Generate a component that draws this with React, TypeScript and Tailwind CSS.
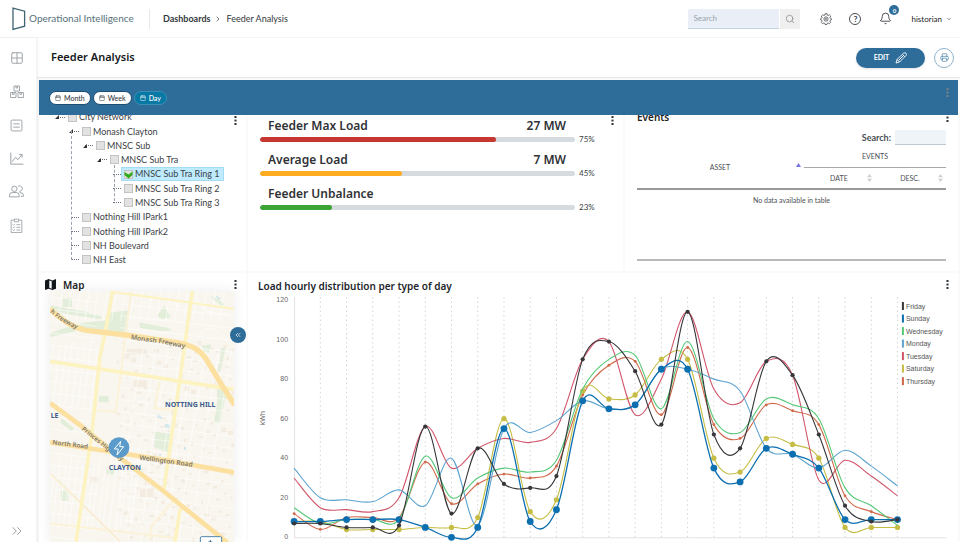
import React from 'react';
import {
  Bell,
  Calendar,
  ChevronDown,
  ChevronRight,
  ChevronsLeft,
  ChevronsRight,
  Grid2x2,
  Printer,
  Search,
} from 'lucide-react';

interface TreeNode {
  label: string;
  indent: string;
  open?: boolean;
  selected?: boolean;
}

interface Series {
  name: string;
  color: string;
  values: number[];
  width: number;
  dot: number;
}

const tree: TreeNode[] = [
  { label: 'City Network', indent: 'pl-4', open: true },
  { label: 'Monash Clayton', indent: 'pl-[30px]', open: true },
  { label: 'MNSC Sub', indent: 'pl-[44px]', open: true },
  { label: 'MNSC Sub Tra', indent: 'pl-[58px]', open: true },
  { label: 'MNSC Sub Tra Ring 1', indent: 'pl-[72px]', selected: true },
  { label: 'MNSC Sub Tra Ring 2', indent: 'pl-[72px]' },
  { label: 'MNSC Sub Tra Ring 3', indent: 'pl-[72px]' },
  { label: 'Nothing Hill IPark1', indent: 'pl-[30px]' },
  { label: 'Nothing Hill IPark2', indent: 'pl-[30px]' },
  { label: 'NH Boulevard', indent: 'pl-[30px]' },
  { label: 'NH East', indent: 'pl-[30px]' },
];

const loads = [
  { label: 'Feeder Max Load', value: '27 MW', percent: 75, color: 'bg-[#c63732]' },
  { label: 'Average Load', value: '7 MW', percent: 45, color: 'bg-[#fdab20]' },
  { label: 'Feeder Unbalance', value: '', percent: 23, color: 'bg-[#3da535]' },
];

const series: Series[] = [
  { name: 'Friday', color: '#37373b', width: 1.1, dot: 2.1, values: [7, 7, 5, 5, 6, 56, 12, 45, 27, 25, 31, 90, 99, 84, 57, 114, 52, 45, 89, 82, 52, 16, 8, 9] },
  { name: 'Sunday', color: '#0b6fb0', width: 1.3, dot: 3.4, values: [8, 8, 9, 9, 9, 5, 0, 5, 55, 8, 14, 69, 65, 67, 85, 85, 35, 28, 45, 42, 35, 9, 9, 9] },
  { name: 'Wednesday', color: '#54c878', width: 1.1, dot: 0, values: [15, 7, 9, 9, 9, 41, 20, 30, 35, 33, 39, 75, 90, 92, 65, 99, 60, 53, 70, 67, 60, 25, 16, 6] },
  { name: 'Monday', color: '#5ba3d0', width: 1.1, dot: 0, values: [35, 20, 19, 18, 24, 16, 40, 6, 55, 53, 59, 69, 65, 67, 85, 85, 80, 74, 45, 42, 35, 44, 36, 26] },
  { name: 'Tuesday', color: '#d0556a', width: 1.1, dot: 0, values: [30, 15, 14, 13, 20, 56, 35, 45, 50, 48, 55, 90, 99, 62, 80, 114, 75, 68, 89, 82, 29, 39, 31, 21] },
  { name: 'Saturday', color: '#c5bd44', width: 1.1, dot: 2.6, values: [8, 8, 4, 4, 4, 5, 5, 10, 60, 13, 19, 74, 70, 72, 90, 90, 40, 33, 50, 47, 40, 5, 5, 5] },
  { name: 'Thursday', color: '#d0694a', width: 1.1, dot: 1.4, values: [12, 4, 10, 10, 10, 38, 17, 27, 32, 30, 36, 72, 87, 89, 62, 96, 57, 50, 67, 64, 57, 21, 13, 9] },
];

const drawOrder = ['Thursday', 'Saturday', 'Tuesday', 'Monday', 'Wednesday', 'Sunday', 'Friday'];

const px = (i: number) => 46 + i * 26.2;
const py = (v: number) => 243 - v * 1.975;

// cubic segments with tangents taken from the neighbouring points
const smoothPath = (values: number[]) => {
  const pts = values.map((v, i) => [px(i), py(v)]);
  let d = `M${pts[0][0]} ${pts[0][1]}`;
  for (let i = 0; i < pts.length - 1; i++) {
    const p0 = pts[Math.max(i - 1, 0)];
    const p1 = pts[i];
    const p2 = pts[i + 1];
    const p3 = pts[Math.min(i + 2, pts.length - 1)];
    d += `C${p1[0] + (p2[0] - p0[0]) / 6} ${p1[1] + (p2[1] - p0[1]) / 6} ${p2[0] - (p3[0] - p1[0]) / 6} ${p2[1] - (p3[1] - p1[1]) / 6} ${p2[0]} ${p2[1]}`;
  }
  return d;
};

const MoreButton: React.FC<{ className?: string }> = ({ className = 'text-[#33383d]' }) => (
  <button type="button" aria-label="More options" className={`flex w-2 justify-center ${className}`}>
    <svg viewBox="0 0 3 10" className="h-[9px] w-[3px]" fill="currentColor">
      <rect width="2.4" height="2.2" x="0.3" y="0" rx="0.6" />
      <rect width="2.4" height="2.2" x="0.3" y="3.9" rx="0.6" />
      <rect width="2.4" height="2.2" x="0.3" y="7.8" rx="0.6" />
    </svg>
  </button>
);

const Header: React.FC = () => (
  <header className="flex h-[38px] shrink-0 items-center border-b border-gray-100 bg-white pl-3 pr-2 shadow-sm">
    <svg viewBox="0 0 14 24" className="h-6 w-[14px]" fill="none" stroke="#3f6470" strokeWidth="1.3">
      <path d="M1 1.2 12.6 4.2v15L1 22.4z" />
    </svg>
    <span className="ml-[3px] w-[106px] whitespace-nowrap text-[10px] text-[#56717b]">Operational Intelligence</span>
    <div className="ml-[14px] h-5 w-px bg-gray-200" />
    <nav className="ml-[13px] flex items-center text-[9px] text-[#33383d]">
      <a href="#dashboards" className="font-bold">Dashboards</a>
      <ChevronRight className="mx-1 h-2 w-2" />
      <span>Feeder Analysis</span>
    </nav>

    <form className="ml-auto flex h-5 gap-px">
      <input
        type="text"
        aria-label="Search"
        placeholder="Search"
        className="w-[91px] border-b border-[#c3d2de] bg-[#e9eef7] px-[5px] text-[8px] placeholder:text-[#9aa3ad]"
      />
      <button type="button" aria-label="Search" className="flex w-5 items-center justify-center bg-[#efefef] text-[#8b8b8b]">
        <Search className="h-[10px] w-[10px]" strokeWidth={1.8} />
      </button>
    </form>
    <button type="button" aria-label="Settings" className="ml-5 text-[#4b4f54]">
      <svg viewBox="0 0 24 26" className="h-3 w-3" fill="none" stroke="currentColor" strokeWidth="1.8">
        <path d="M10 1.5h4l.6 3 2 .9 2.7-1.6 2.9 2.9-1.7 2.6.9 2 2.1.7v3l-2.2.7-.8 2 1.700 2.600-2.900 2.900-2.700-1.700-2 .9-.6 2.500h-4l-.6-2.500-2-.9-2.700 1.700-2.900-2.900 1.700-2.600-.8-2L.5 15v-3l2.100-.7.9-2-1.700-2.600 2.900-2.900 2.700 1.600 2-.9z" />
        <circle cx="12" cy="13" r="4.6" />
        <circle cx="12" cy="13" r="1.2" />
      </svg>
    </button>
    <button
      type="button"
      aria-label="Help"
      className="ml-[17px] flex h-3 w-3 items-center justify-center rounded-full border border-[#4b4f54] text-[8px] font-bold text-[#33383d]"
    >
      ?
    </button>
    <button type="button" aria-label="Notifications" className="relative ml-[18px] text-[#33383d]">
      <Bell className="h-[13px] w-[13px]" strokeWidth={1.6} />
      <span className="absolute -top-[7px] left-[10px] flex h-[10px] w-[10px] items-center justify-center rounded-full bg-[#2e6d9a] text-[6px] font-bold text-white">
        0
      </span>
    </button>
    <button type="button" className="ml-[19px] flex items-center text-[8px] text-[#222]">
      historian
      <ChevronDown className="ml-1 h-[6px] w-[6px]" />
    </button>
  </header>
);

const Sidebar: React.FC = () => (
  <aside className="z-10 flex w-[37px] shrink-0 flex-col items-center gap-5 border-r border-gray-100 bg-white pb-[3px] pr-[3px] pt-[13px] text-[#9aa0a5] shadow-sm">
    <a href="#dashboards" aria-label="Dashboards">
      <Grid2x2 className="h-[14px] w-[14px]" strokeWidth={1.6} />
    </a>
    <a href="#assets" aria-label="Assets">
      <svg viewBox="0 0 28 28" className="h-[14px] w-[14px]" fill="none" stroke="currentColor" strokeWidth="1.8">
        <path d="M8 2h11v10H8zM1 15h11v10H1zM16 15h11v10H16zM12 2v4h3V2M5 15v4h3v-4M20 15v4h3v-4" />
      </svg>
    </a>
    <a href="#lists" aria-label="Lists">
      <svg viewBox="0 0 24 24" className="h-[13px] w-[13px]" fill="none" stroke="currentColor" strokeWidth="1.7">
        <rect x="2" y="2" width="20" height="20" rx="2" />
        <path d="M6 9h12M6 15h12" />
      </svg>
    </a>
    <a href="#trends" aria-label="Trends">
      <svg viewBox="0 0 26 24" className="h-[13px] w-[14px]" fill="none" stroke="currentColor" strokeWidth="1.8">
        <path d="M1.5 1v21.5H25M4 18l6-8 5 4 7-9M17 4.500h5.500V10" />
      </svg>
    </a>
    <a href="#users" aria-label="Users">
      <svg viewBox="0 0 28 24" className="h-[13px] w-[15px]" fill="none" stroke="currentColor" strokeWidth="1.8">
        <circle cx="10" cy="7" r="5" />
        <path d="M1 22v-3q0-5 5-5h8q5 0 5 5v3zM17 2.500a5 5 0 1 1 2 9M20 14q7 0 7 5v2h-5" />
      </svg>
    </a>
    <a href="#tasks" aria-label="Tasks">
      <svg viewBox="0 0 24 28" className="h-[15px] w-[13px]" fill="none" stroke="currentColor" strokeWidth="1.6">
        <path d="M8 4H2v23h20V4h-6M8 2h8v5H8zM5 12l1.500 1.500L9 11M5 17l1.500 1.500L9 16M5 22l1.500 1.500L9 21M12 12.500h7M12 17.500h7M12 22.500h7" />
      </svg>
    </a>
    <button type="button" aria-label="Expand menu" className="mt-auto">
      <ChevronsRight className="h-4 w-4" strokeWidth={1.5} />
    </button>
  </aside>
);

const AssetTree: React.FC = () => (
  <section className="relative overflow-hidden bg-white">
    <ul className="relative -mt-[5px] grid h-[157px] auto-rows-fr text-[9px] text-[#3c4146]">
      {tree.map((node) => (
        <li key={node.label} className={`flex items-center ${node.indent}`}>
          <span className="relative flex w-[10px] items-center">
            <span className="ml-[2px] w-2 border-t border-dotted border-gray-500" />
            {node.open && (
              <svg viewBox="0 0 4 4" className="absolute left-0 h-1 w-1" fill="#333">
                <path d="M4 0v4H0z" />
              </svg>
            )}
          </span>
          <label
            className={`flex h-[14px] items-center gap-[2px] border pl-[2px] pr-[3px] ${
              node.selected ? 'border-[#a5dcf5] bg-[#beebff]' : 'border-transparent'
            }`}
          >
            <span className="relative flex">
              <input
                type="checkbox"
                defaultChecked={node.selected}
                className="h-[9px] w-[9px] appearance-none border border-[#c3c3c3] bg-[#e2e2e2]"
              />
              {node.selected && (
                <svg viewBox="0 0 9 9" className="pointer-events-none absolute inset-0 h-[9px] w-[9px]">
                  <path d="M.5 2 4.500 4.500 8.500 1.500V5L4.500 8.500.5 5z" fill="#35a81c" />
                </svg>
              )}
            </span>
            {node.label}
          </label>
        </li>
      ))}
    </ul>
    <span className="absolute bottom-[11px] left-[32px] top-4 border-l border-dashed border-gray-400" />
    <span className="absolute left-[75px] top-[50px] h-9 border-l border-dashed border-gray-400" />
    <div className="absolute right-[7px] top-[1px]">
      <MoreButton />
    </div>
  </section>
);

const FeederLoads: React.FC = () => (
  <section className="relative bg-white pl-3 pr-7 pt-[2px]">
    {loads.map((load) => (
      <div key={load.label} className="h-[34px]">
        <div className="flex h-[18px] items-center justify-between pl-2 pr-[29px] font-['Noto_Sans',sans-serif] text-[12px] font-semibold text-[#2f3236]">
          <span>{load.label}</span>
          <span>{load.value}</span>
        </div>
        <div className="flex h-2 items-center gap-1">
          <div className="h-[5px] flex-1 overflow-hidden rounded-full bg-[#d5dbdf]">
            <div className={`h-full rounded-full ${load.color}`} style={{ width: `${load.percent}%` }} />
          </div>
          <span className="w-4 text-[8px] text-[#3c4146]">{load.percent}%</span>
        </div>
      </div>
    ))}
    <div className="absolute right-[7px] top-[1px]">
      <MoreButton />
    </div>
  </section>
);

const SortIcon: React.FC = () => (
  <svg viewBox="0 0 6 10" className="h-2 w-[5px]" fill="#cfcfcf">
    <path d="M3 0 6 4H0zM3 10 0 6h6z" />
  </svg>
);

const Events: React.FC = () => (
  <section className="overflow-hidden bg-white px-3">
    <div className="-mt-[6px] flex h-4 items-center justify-between">
      <h2 className="font-['Noto_Sans',sans-serif] text-[10px] font-semibold leading-4 text-[#222]">Events</h2>
      <div className="-mr-[5px]">
        <MoreButton />
      </div>
    </div>
    <div className="mt-[5px] flex h-[15px] items-center justify-end gap-1">
      <label htmlFor="events-search" className="text-[9px] font-bold text-[#4b4f54]">Search:</label>
      <input id="events-search" type="text" className="h-[15px] w-[51px] border-b border-[#bcc9d0] bg-[#eef4f8] text-[8px]" />
    </div>
    <div className="h-[116px] border-b-2 border-[#b9b9b9]">
      <table className="w-full table-fixed border-collapse text-[7px] leading-3 text-[#4b4f54]">
        <colgroup>
          <col className="w-[54%]" />
          <col className="w-[23%]" />
          <col className="w-[23%]" />
        </colgroup>
        <thead>
          <tr className="h-[22px]">
            <th rowSpan={2} className="border-b-2 border-[#999] p-0 font-normal">
              <div className="flex items-center pl-[7px] pr-[3px]">
                <span className="flex-1">ASSET</span>
                <svg viewBox="0 0 5 4" className="-mt-1 h-1 w-[5px]" fill="#7474dd">
                  <path d="M2.500 0 5 4H0z" />
                </svg>
              </div>
            </th>
            <th colSpan={2} className="border-b border-[#a8a8a8] p-0 font-normal">EVENTS</th>
          </tr>
          <tr className="h-[22px]">
            {['DATE', 'DESC.'].map((name) => (
              <th key={name} className="border-b-2 border-[#999] p-0 font-normal">
                <div className="flex items-center pl-[7px] pr-[3px]">
                  <span className="flex-1">{name}</span>
                  <SortIcon />
                </div>
              </th>
            ))}
          </tr>
        </thead>
        <tbody>
          <tr>
            <td colSpan={3} className="p-0 pt-1 text-center">No data available in table</td>
          </tr>
        </tbody>
      </table>
    </div>
  </section>
);

const steps = (from: number, to: number, by: number) => {
  const out: number[] = [];
  for (let n = from; n < to; n += by) out.push(n);
  return out;
};

// buildings scattered over the industrial blocks
const blocks = steps(0, 210, 1).map((n) => ({
  x: 345 + ((n * 67) % 350),
  y: 205 + ((n * 131) % 600),
  w: 5 + ((n * 5) % 11),
  h: 4 + ((n * 7) % 10),
}));

const CityMap: React.FC = () => (
  <svg
    viewBox="150 62 552 753"
    preserveAspectRatio="xMidYMin slice"
    className="h-full w-full bg-[#f9f6f0] font-['Noto_Sans',sans-serif]"
  >
    <g fill="#f4ece1">
      {blocks.map((b, i) => (
        <rect key={i} x={b.x} y={b.y} width={b.w} height={b.h} />
      ))}
      <path d="M380 235h60v18h-60zM400 330h40v20h-40zM270 620h25v18h-25zM420 655h40v25h-40z" />
    </g>
    <g fill="#e3eeda">
      <path d="M188 82h28v28h-28zM320 128l66-8-4 62-64 8zM240 158l78-8v32l-70 4-26-10zM150 105l110 20 46 14-4 8-90-14-62-14zM470 138l22-32 20 34-24 6zM418 156l84 16 14 8-30 3-66-10zM150 188l60-20 20 14-78 18zM296 376h30v20h-30zM466 484l44 6-6 56-42-16zM650 340l40 20-16 30-14 70-18-4 10-60zM182 440l40 34-8 8-32-24zM183 658h22v34h-22zM320 598h22v14h-22zM640 80l34 20-8 8-36-30zM604 226l30-4-8 26-12-4z" />
      <path d="M664 232h12l-8 44-8 30-8-4 8-34z" />
    </g>
    <g fill="#cbe5ea">
      <path d="M470 432l14 4 4 10-16-4zM492 464l14-4 4 10-8 6zM552 530h5v8h-5zM650 76l12 10-4 3-10-10zM478 550h4v8h-4z" />
    </g>
    <g stroke="#fff" strokeWidth="2" strokeOpacity="0.85" fill="none">
      {steps(160, 700, 27).map((x) => (
        <path key={`t${x}`} d={`M${x} 62l-14 90`} />
      ))}
      {steps(160, 310, 19).map((x) => (
        <path key={`m${x}`} d={`M${x} ${205 + (x % 30)}l-22 190`} />
      ))}
      {steps(150, 420, 17).map((x) => (
        <path key={`b${x}`} d={`M${x + 15} ${550 + (x % 40)}l-26 210`} />
      ))}
      {steps(420, 720, 38).map((x) => (
        <path key={`r${x}`} d={`M${x + 10} 235l-50 290l-34 290`} />
      ))}
      {steps(80, 810, 36).map((y) => (
        <path key={`h${y}`} d={`M150 ${y}l140 16M360 ${y + 20}l342 38`} />
      ))}
      <path d="M590 90q30 50 96 40M600 190q30-30 60 0t40 20M430 100q50-40 110 10M610 280q20 30 40 10" />
    </g>
    <g fill="none" stroke="#fcf2d8" strokeWidth="6">
      <path d="M395 62l-18 120-20 170-10 72-60-4M478 335l-13 78 55 6M150 760l270 30 110 14M518 694l-64 74-4 40M150 610l90 86 120 117" />
    </g>
    <path d="M158 612l90 90 110 108" stroke="#e9dfc9" strokeWidth="1.5" fill="none" />
    <g fill="none" stroke="#fdf3c0" strokeWidth="11">
      <path d="M338 62l-22 124-16 72-26 244-46 312M577 62l-38 270-48 330M541 714l-16 100M150 273l550 84" />
      <path d="M330 64l180 24 192 28" strokeWidth="6" />
    </g>
    <g fill="none" stroke="#fce0a0" strokeWidth="14" strokeLinejoin="round">
      <path d="M150 116c36 30 60 54 108 64l120 14 150 22c46 8 72 20 94 56l42 70 40 62" strokeWidth="16" />
      <path d="M150 398l90 66 130 106 120 92 192 155" />
      <path d="M150 516l170 26 180 28 202 36" />
    </g>
    <defs>
      <path id="freeway-west" d="M150 126q40 34 92 56" />
      <path id="freeway" d="M392 207l90 12 86 18" />
      <path id="princes" d="M244 478l82 66 50 38" />
      <path id="north" d="M157 522l130 16" />
      <path id="wellington" d="M418 568l190 26" />
    </defs>
    <g fill="#7d7a70" fontSize="19" fontWeight="600">
      <text><textPath href="#freeway-west">h Freeway</textPath></text>
      <text fontSize="20"><textPath href="#freeway">Monash Freeway</textPath></text>
      <text><textPath href="#princes">Princes Highway</textPath></text>
      <text><textPath href="#north">North Road</textPath></text>
      <text fontSize="20"><textPath href="#wellington">Wellington Road</textPath></text>
    </g>
    <g fill="#3f5d8c" fontSize="21" fontWeight="700">
      <text x="495" y="409">NOTTING HILL</text>
      <text x="152" y="442">LE</text>
      <text x="326" y="599">CLAYTON</text>
    </g>
    <circle cx="357" cy="532" r="31" fill="#5b9bcb" />
    <path d="M362 513l-19 23h12l-4 18 20-25h-12z" fill="none" stroke="#fff" strokeWidth="3" strokeLinejoin="round" />
    <rect x="601" y="799" width="64" height="30" rx="4" fill="#fff" stroke="#4f86ad" strokeWidth="3" />
    <path d="M625 815h12M631 809v12" stroke="#33688f" strokeWidth="3" />
  </svg>
);

const MapPanel: React.FC = () => (
  <section className="relative flex min-h-0 flex-col bg-white pl-[11px] pr-3">
    <div className="-ml-[5px] flex h-[18px] shrink-0 items-end gap-[7px] text-[#222]">
      <svg viewBox="0 0 12 12" className="mb-px h-[11px] w-[11px]">
        <path d="M0 1.500 4 0l4 1.500L12 0v10.500L8 12 4 10.500 0 12z" fill="#16191c" />
        <path d="M4.700 1.500 7.300 2.500v8L4.700 9.500z" fill="#fff" />
      </svg>
      <h2 className="font-['Noto_Sans',sans-serif] text-[10px] font-semibold leading-3">Map</h2>
    </div>
    <div className="min-h-0 flex-1 overflow-hidden shadow-[0_0_12px_rgba(0,0,0,0.08)]">
      <CityMap />
    </div>
    <div className="absolute right-[7px] top-[7px]">
      <MoreButton />
    </div>
    <button
      type="button"
      aria-label="Collapse panel"
      className="absolute right-0 top-[54px] flex h-4 w-4 items-center justify-center rounded-full bg-[#2e6d9a] text-white"
    >
      <ChevronsLeft className="h-2 w-2" />
    </button>
  </section>
);

const LoadChart: React.FC = () => (
  <section className="relative col-span-2 min-h-0 overflow-hidden bg-white">
    <h2 className="absolute left-[10px] top-[7px] font-['Noto_Sans',sans-serif] text-[10px] font-semibold leading-3 text-[#22262a]">
      Load hourly distribution per type of day
    </h2>
    <svg viewBox="0 0 709 248" className="mt-[21px] w-full">
      {steps(1, 24, 1).map((i) => (
        <path key={i} d={`M${px(i)} 3V243`} stroke="#d4d4d4" strokeWidth="1" strokeDasharray="1.500 3" />
      ))}
      <path d="M46.500 3V243.500H697" stroke="#e3e3e3" fill="none" />
      <g fontFamily="Liberation Sans, sans-serif" fontSize="7" fill="#666">
        {steps(0, 121, 20).map((v) => (
          <text key={v} x="40" y={py(v) + 2} textAnchor="end">{v}</text>
        ))}
        <text x="17" y="124" textAnchor="middle" transform="rotate(-90 17 124)">kWh</text>
      </g>
      {drawOrder.map((name) => {
        const s = series.find((item) => item.name === name)!;
        return (
          <g key={name}>
            <path d={smoothPath(s.values)} fill="none" stroke={s.color} strokeWidth={s.width} />
            {s.dot > 0 && s.values.map((v, i) => <circle key={i} cx={px(i)} cy={py(v)} r={s.dot} fill={s.color} />)}
          </g>
        );
      })}
      <g fontFamily="Liberation Sans, sans-serif" fontSize="7" fill="#555">
        {series.map((s, i) => (
          <g key={s.name}>
            <rect x="653" y={8 + i * 12.5} width="2" height="8" fill={s.color} />
            <text x="657" y={14.5 + i * 12.5}>{s.name}</text>
          </g>
        ))}
      </g>
    </svg>
    <div className="absolute right-[7px] top-[7px]">
      <MoreButton />
    </div>
  </section>
);

const periods = ['Month', 'Week', 'Day'];

const App: React.FC = () => (
  <div className="flex h-screen flex-col overflow-hidden bg-white font-[Lato,sans-serif]">
    <Header />
    <div className="flex min-h-0 flex-1">
      <Sidebar />
      <main className="flex min-w-0 flex-1 flex-col bg-[#fafafa]">
        <div className="flex h-10 shrink-0 items-center border-b border-gray-200 bg-white pl-[14px] pr-[6px]">
          <h1 className="font-['Noto_Sans',sans-serif] text-[11px] font-semibold text-[#16191c]">Feeder Analysis</h1>
          <button
            type="button"
            className="ml-auto flex h-5 w-[69px] items-center justify-center gap-[6px] rounded-full bg-[#2e6d9a] text-[7px] font-bold text-white shadow"
          >
            EDIT
            <svg viewBox="0 0 24 24" className="h-3 w-3" fill="none" stroke="currentColor" strokeWidth="1.800">
              <path d="M2 22l2-7L17 2.500q3-2 5 0t0 4.500L9 20zM4 15l5 5M15 5l4.500 4.500M7 17 17 7" />
            </svg>
          </button>
          <button
            type="button"
            aria-label="Print"
            className="ml-[9px] flex h-5 w-5 items-center justify-center rounded-full border border-[#8fb3cd] text-[#2e6d9a]"
          >
            <Printer className="h-[9px] w-[9px]" strokeWidth={1.6} />
          </button>
        </div>

        <div className="mx-[2px] mt-[2px] flex h-[35px] shrink-0 items-center gap-[2px] bg-[#2e6d9a] pl-[10px] pr-[7px] pt-px">
          {periods.map((period) => (
            <button
              key={period}
              type="button"
              className={`flex h-[14px] items-center gap-[3px] rounded-full border px-[5px] text-[7px] font-medium ${
                period === 'Day' ? 'border-[#3b8fb5] bg-[#0878a5] text-white' : 'border-[#1f4d70] bg-white text-[#33383d]'
              }`}
            >
              <Calendar className="h-[6px] w-[6px]" />
              {period}
            </button>
          ))}
          <div className="-mt-3 ml-auto">
            <MoreButton className="text-[#7d7f80]" />
          </div>
        </div>

        <div className="mx-[2px] grid min-h-0 flex-1 grid-cols-[207px_minmax(0,375fr)_minmax(0,333fr)] grid-rows-[156px_minmax(0,1fr)] gap-[2px]">
          <AssetTree />
          <FeederLoads />
          <Events />
          <MapPanel />
          <LoadChart />
        </div>
      </main>
    </div>
  </div>
);

export default App;
